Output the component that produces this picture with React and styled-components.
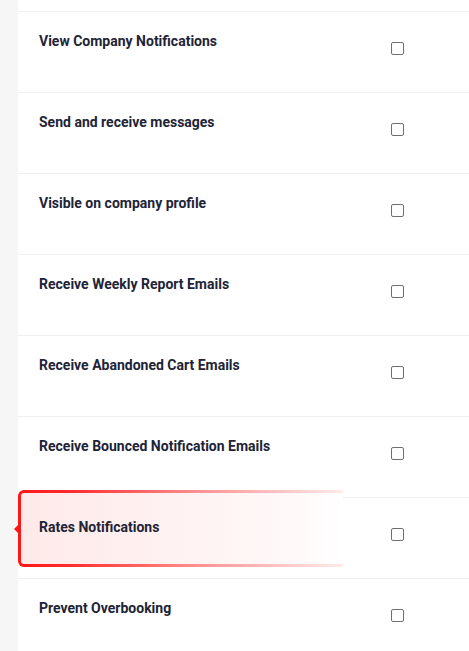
import React from "react"
import styled, { createGlobalStyle } from "styled-components"

const GlobalStyle = createGlobalStyle`
  html, body {
    margin: 0;
    padding: 0;
    background: #f6f6f6;
    font-family: Roboto, "Liberation Sans", sans-serif;
  }
`

const Page = styled.div`
  display: flex;
  min-height: 651px;
  overflow: hidden;
`

const Gutter = styled.div`
  width: 18px;
  flex-shrink: 0;
  background: #f6f6f6;
`

const Panel = styled.div`
  flex: 1;
  background: #ffffff;
  padding-top: 11px;
  position: relative;
`

const Row = styled.div`
  position: relative;
  display: flex;
  height: 80px;
  border-top: 1px solid #f0f0f2;
`

const Label = styled.div`
  position: relative;
  flex: 1;
  padding: 20px 0 0 21px;
  font-size: 14px;
  line-height: 18px;
  font-weight: 700;
  color: #212336;
`

const CheckCell = styled.div`
  position: relative;
  width: 78px;
  padding-top: 30px;
`

const Box = styled.span`
  display: block;
  width: 13px;
  height: 13px;
  box-sizing: border-box;
  border: 1.5px solid #6f6f6f;
  border-radius: 2px;
  background: #fff;
`

const Highlight = styled.div`
  position: absolute;
  left: 0;
  top: -8px;
  width: 325px;
  height: 77px;
  box-sizing: border-box;
  border: 3px solid transparent;
  border-right-width: 0;
  border-radius: 6px 0 0 6px;
  background:
    linear-gradient(to right, rgba(255, 40, 40, 0.1), rgba(255, 60, 60, 0.03) 85%, rgba(255, 255, 255, 0)) padding-box,
    linear-gradient(#ffffff, #ffffff) padding-box,
    linear-gradient(to right, #ff1717 0%, #ff2a2a 15%, rgba(255, 70, 70, 0.6) 55%, rgba(255, 90, 90, 0.12) 100%) border-box;
  pointer-events: none;

  &::before {
    content: "";
    position: absolute;
    left: -7px;
    top: 50%;
    margin-top: -4px;
    border-style: solid;
    border-width: 4px 4px 4px 0;
    border-color: transparent #ff1717 transparent transparent;
  }
`

const settings = [
  "View Company Notifications",
  "Send and receive messages",
  "Visible on company profile",
  "Receive Weekly Report Emails",
  "Receive Abandoned Cart Emails",
  "Receive Bounced Notification Emails",
  "Rates Notifications",
  "Prevent Overbooking",
]

const App = () => {
  return (
    <>
      <GlobalStyle />
      <Page>
        <Gutter />
        <Panel>
          {settings.map((name) => (
            <Row key={name}>
              {name === "Rates Notifications" && <Highlight />}
              <Label>{name}</Label>
              <CheckCell>
                <Box />
              </CheckCell>
            </Row>
          ))}
        </Panel>
      </Page>
    </>
  )
}

export default App
